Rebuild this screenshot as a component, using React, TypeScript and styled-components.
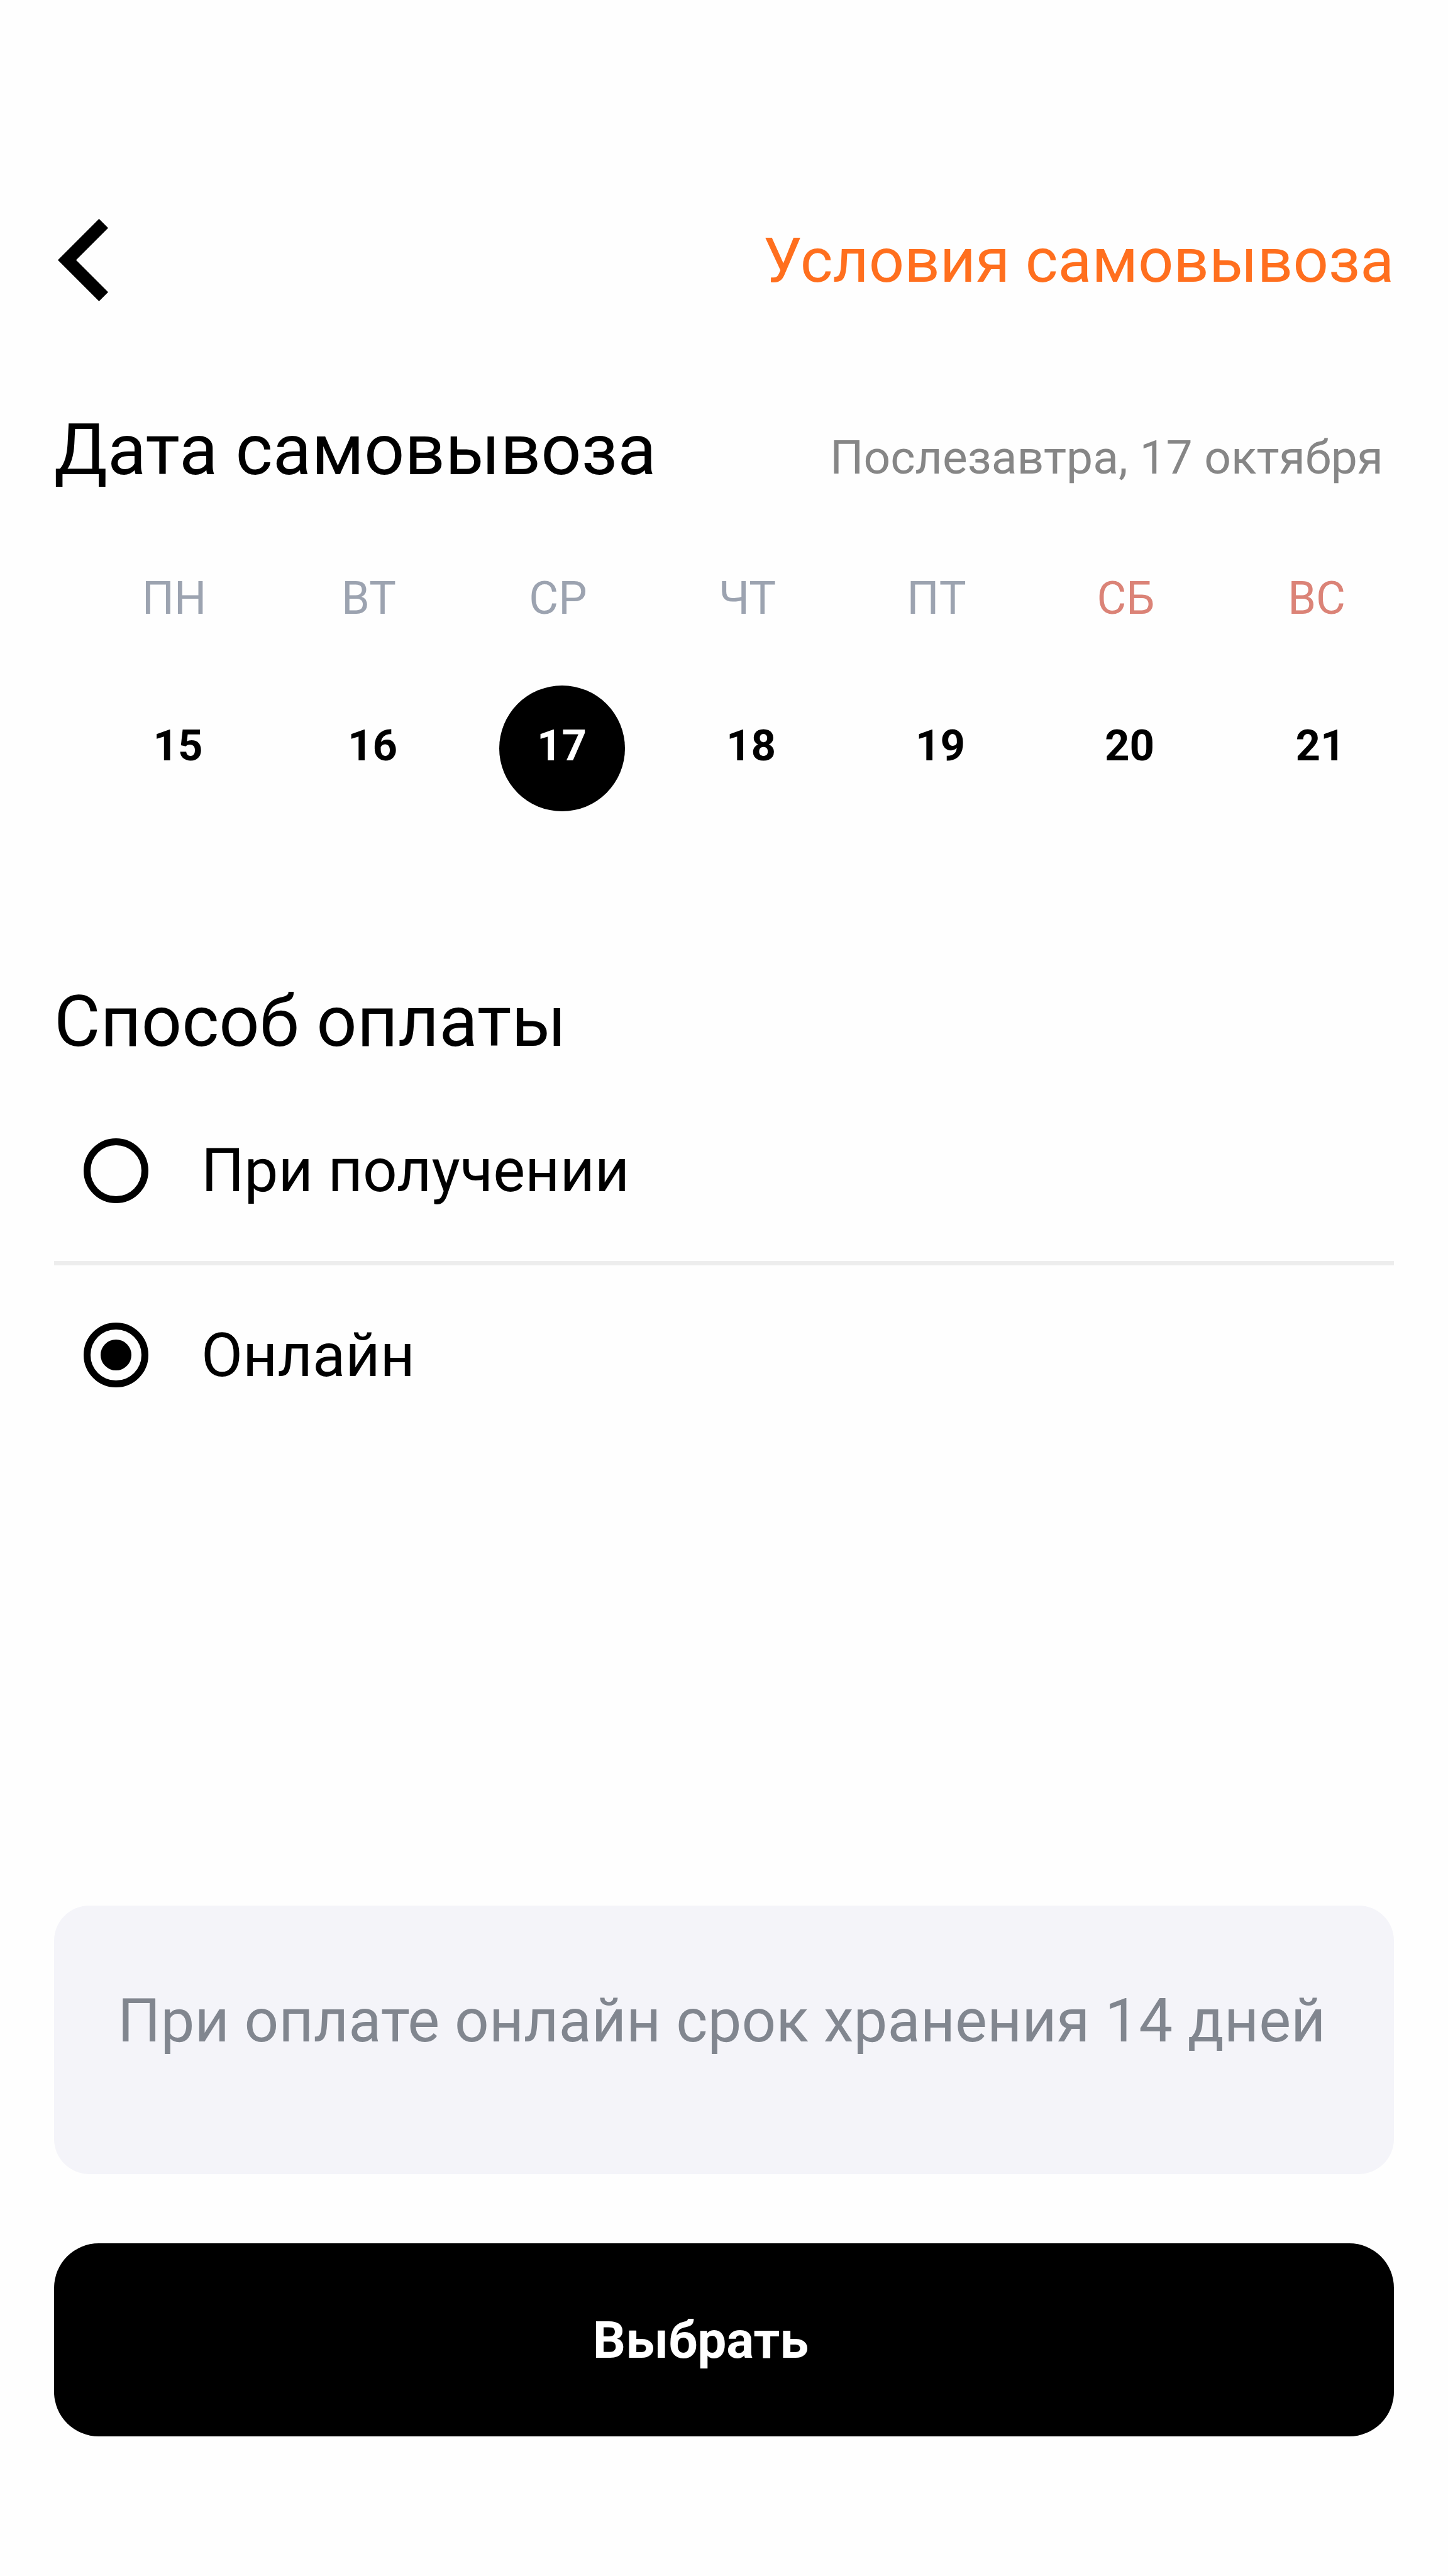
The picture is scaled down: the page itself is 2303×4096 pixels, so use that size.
import { useState } from "react";
import styled, { createGlobalStyle } from "styled-components";

const GlobalStyle = createGlobalStyle`
  *, *::before, *::after { box-sizing: border-box; }
  body {
    margin: 0;
    background: #fefefe;
    color: #000;
    font-family: Roboto, "Noto Sans", sans-serif;
  }
  button, input { font: inherit; color: inherit; margin: 0; }
`;

const Screen = styled.main`
  display: flex;
  flex-direction: column;
  min-height: 100vh;
  padding: 348px 86px 222px;
`;

const Header = styled.header`
  display: flex;
  align-items: center;
  justify-content: space-between;
`;

const BackButton = styled.button`
  display: flex;
  padding: 0 6px;
  border: 0;
  background: none;
  cursor: pointer;
`;

const TermsLink = styled.a`
  color: #ff6f1e;
  font-size: 99px;
  line-height: 120px;
  text-decoration: none;
`;

const DateHeading = styled.div`
  display: flex;
  align-items: flex-end;
  justify-content: space-between;
  margin-top: 171px;
`;

const Title = styled.h2`
  margin: 0;
  font-size: 113px;
  font-weight: 400;
  line-height: 132px;
`;

const ChosenDate = styled.span`
  padding-right: 17px;
  color: #868686;
  font-size: 75px;
  line-height: 110px;
`;

const Week = styled.div`
  display: grid;
  grid-template-columns: 318fr repeat(5, 301fr) 306fr;
  justify-items: center;
`;

const WeekdayRow = styled(Week)`
  margin: 128px -30px 0 32px;
`;

const DayRow = styled(Week)`
  margin: 96px -36px 0 38px;
`;

const Weekday = styled.span<{ $weekend: boolean }>`
  color: ${(p) => (p.$weekend ? "#db8377" : "#9ca3b0")};
  font-size: 72px;
  line-height: 84px;
`;

const Day = styled.button<{ $selected: boolean }>`
  width: 200px;
  height: 200px;
  padding: 0 0 8px;
  border: 0;
  border-radius: 50%;
  background: ${(p) => (p.$selected ? "#000" : "transparent")};
  color: ${(p) => (p.$selected ? "#fff" : "#000")};
  font-size: 69px;
  font-weight: 700;
  line-height: 84px;
  cursor: pointer;
`;

const Payment = styled.section`
  margin-top: 269px;
`;

const Options = styled.div`
  margin-top: 26px;
`;

const Option = styled.label`
  display: flex;
  align-items: center;
  gap: 84px;
  height: 288px;
  padding-left: 47px;
  font-size: 96px;
  line-height: 112px;
  cursor: pointer;

  & + & {
    height: 292px;
    border-top: 7px solid #ededed;
  }
`;

const Radio = styled.input`
  appearance: none;
  display: grid;
  place-items: center;
  width: 103px;
  height: 103px;
  border: 11px solid #000;
  border-radius: 50%;

  &:checked::before {
    content: "";
    width: 49px;
    height: 49px;
    border-radius: 50%;
    background: #000;
  }
`;

const Footer = styled.footer`
  display: flex;
  flex-direction: column;
  gap: 110px;
  margin-top: auto;
`;

const Notice = styled.p`
  margin: 0;
  padding: 127px 101px 188px;
  border-radius: 56px;
  background: #f4f4f9;
  color: #81868f;
  font-size: 96px;
  line-height: 112px;
`;

const SubmitButton = styled.button`
  height: 307px;
  padding: 0 74px 0 0;
  border: 0;
  border-radius: 71px;
  background: #000;
  color: #fff;
  font-size: 82px;
  font-weight: 700;
  line-height: 112px;
  cursor: pointer;
`;

const WEEK = [
  { name: "ПН", date: 15, weekend: false },
  { name: "ВТ", date: 16, weekend: false },
  { name: "СР", date: 17, weekend: false },
  { name: "ЧТ", date: 18, weekend: false },
  { name: "ПТ", date: 19, weekend: false },
  { name: "СБ", date: 20, weekend: true },
  { name: "ВС", date: 21, weekend: true },
];

const METHODS = [
  { id: "on-receipt", label: "При получении" },
  { id: "online", label: "Онлайн" },
];

export default function App() {
  const [selected, setSelected] = useState(17);
  const [method, setMethod] = useState("online");

  return (
    <>
      <GlobalStyle />
      <Screen>
        <Header>
          <BackButton type="button" aria-label="Назад">
            <svg width="80" height="131" viewBox="0 0 80 131" aria-hidden="true">
              <path d="M65.5 0L80 14.5L29 65.5L80 116.5L65.5 131L0 65.5Z" fill="#000" />
            </svg>
          </BackButton>
          <TermsLink href="#terms">Условия самовывоза</TermsLink>
        </Header>

        <section>
          <DateHeading>
            <Title>Дата самовывоза</Title>
            <ChosenDate>Послезавтра, 17 октября</ChosenDate>
          </DateHeading>
          <WeekdayRow>
            {WEEK.map((day) => (
              <Weekday key={day.name} $weekend={day.weekend}>
                {day.name}
              </Weekday>
            ))}
          </WeekdayRow>
          <DayRow>
            {WEEK.map((day) => (
              <Day
                key={day.date}
                type="button"
                $selected={day.date === selected}
                aria-pressed={day.date === selected}
                onClick={() => setSelected(day.date)}
              >
                {day.date}
              </Day>
            ))}
          </DayRow>
        </section>

        <Payment>
          <Title id="payment-title">Способ оплаты</Title>
          <Options role="radiogroup" aria-labelledby="payment-title">
            {METHODS.map((item) => (
              <Option key={item.id} htmlFor={item.id}>
                <Radio
                  type="radio"
                  id={item.id}
                  name="payment"
                  checked={method === item.id}
                  onChange={() => setMethod(item.id)}
                />
                {item.label}
              </Option>
            ))}
          </Options>
        </Payment>

        <Footer>
          <Notice>При оплате онлайн срок хранения 14 дней</Notice>
          <SubmitButton type="button">Выбрать</SubmitButton>
        </Footer>
      </Screen>
    </>
  );
}
